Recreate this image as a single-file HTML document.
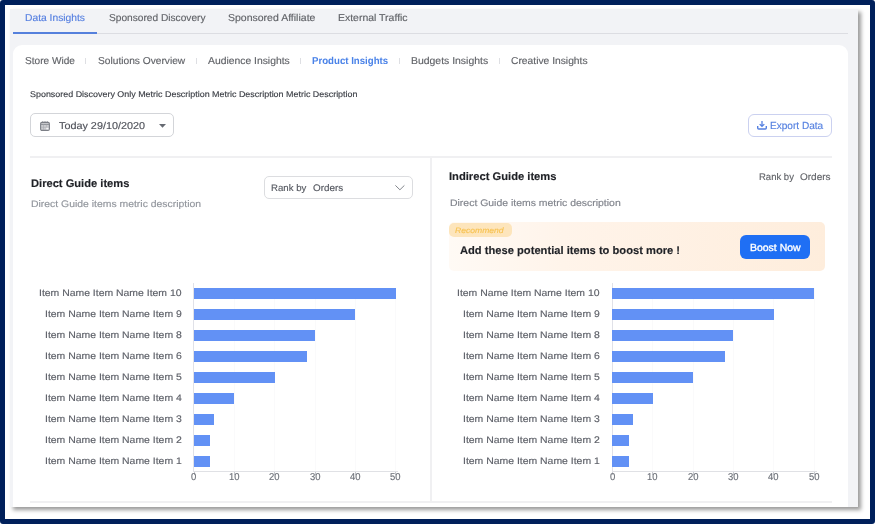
<!DOCTYPE html>
<html><head><meta charset="utf-8"><title>Product Insights</title>
<style>
html,body{margin:0;padding:0}
body{width:875px;height:524px;overflow:hidden;background:#fff;position:relative;font-family:"Liberation Sans", sans-serif}
#frame{position:absolute;left:0;top:0;width:865px;height:514px;border:5px solid #00205b;border-radius:3px;background:#fff}
#shot{position:absolute;left:10px;top:9px;width:848px;height:498px;background:#f2f3f6;box-shadow:3px 3px 4px rgba(0,0,0,.4);overflow:hidden}
#in{position:absolute;left:-10px;top:-9px;width:875px;height:524px;filter:blur(0.45px)}
.t{position:absolute;white-space:pre;text-rendering:geometricPrecision;-webkit-text-stroke:0.15px currentColor;line-height:16px;height:16px;transform-origin:0 50%}
#tabline{position:absolute;left:13px;top:32.6px;width:835px;height:1px;background:#dcdde2}
#tabsel{position:absolute;left:13px;top:31.9px;width:84px;height:2.2px;background:#5580dc}
#card{position:absolute;left:13px;top:45.4px;width:835px;height:470px;background:#fff;border-radius:9px 9px 0 0}
.sep{position:absolute;top:57.8px;width:1px;height:6px;background:#dedfe3}
.box{position:absolute;box-sizing:border-box;border:1px solid #d3d5d9;border-radius:5px;background:#fff}
.hl{position:absolute;height:1.6px;background:#f0f0f2}
.vl{position:absolute;width:1.6px;background:#f0f0f2}
.b{position:absolute;height:11px;background:#6291f5}
.g{position:absolute;top:288px;width:1px;height:183px;background:#fafafb}
.tk{position:absolute;top:471px;width:1px;height:3.5px;background:#c9cbd0}
.ax{position:absolute;top:283px;width:1px;height:189px;background:#e0e1e8}
.bx{position:absolute;top:470.8px;width:205px;height:1px;background:#e0e1e5}
#banner{position:absolute;left:449px;top:222.4px;width:376px;height:48.4px;border-radius:5px;background:linear-gradient(90deg,#fffaf5 0%,#fff4ea 30%,#feeddc 100%)}
#tag{position:absolute;left:449px;top:222.6px;width:63.3px;height:14px;border-radius:5px;background:#fde5bc}
#boost{position:absolute;left:740.3px;top:235.2px;width:69.3px;height:23.7px;border-radius:6px;background:#1f6ff4}
svg{position:absolute;overflow:visible}
</style></head><body>
<div id="frame"></div>
<div id="shot"><div id="in">
<div id="tabline"></div><div id="tabsel"></div>
<div id="card"></div>
<div class="sep" style="left:85.2px"></div><div class="sep" style="left:195.5px"></div><div class="sep" style="left:300px"></div><div class="sep" style="left:398.5px"></div><div class="sep" style="left:498.5px"></div>
<div class="box" style="left:30px;top:113.4px;width:144px;height:23.4px"></div>
<svg style="left:40.2px;top:121.1px" width="10" height="10" viewBox="0 0 10 10"><rect x="0.6" y="1.4" width="8.8" height="8" rx="1.4" fill="#cccdd1" stroke="#7c7f86" stroke-width="1.1"/><path d="M0.6 3.4H9.4" stroke="#8b8e95" stroke-width="1" fill="none"/><path d="M3.5 3.6V9M6.4 3.6V9M1 6.3H9" stroke="#a9abb0" stroke-width="0.6" fill="none"/><path d="M2.6 0.5V1.5M5 0.5V1.5M7.4 0.5V1.5" stroke="#7c7f86" stroke-width="1.3" fill="none"/><path d="M6.2 6.7H8.4V8.4H6.2z" fill="#f6f6f7"/></svg>
<svg style="left:158.7px;top:124px" width="7" height="4" viewBox="0 0 7 4"><path d="M0 0H7L3.5 3.8z" fill="#666a72"/></svg>
<div class="box" style="left:748.2px;top:113.5px;width:84.3px;height:23.2px;border-color:#cbd1f0;border-radius:6px"></div>
<svg style="left:757px;top:121.4px" width="10" height="9" viewBox="0 0 10 9"><path d="M5 0V5.2M2.7 3.1L5 5.4L7.3 3.1" stroke="#5580e0" stroke-width="1.3" fill="none"/><path d="M0.7 5V7Q0.7 8 1.7 8H8.3Q9.3 8 9.3 7V5" stroke="#5580e0" stroke-width="1.4" fill="none"/></svg>
<div class="hl" style="left:30px;top:156px;width:802px"></div>
<div class="hl" style="left:30px;top:501px;width:802px"></div>
<div class="vl" style="left:430px;top:157px;height:345px"></div>
<div class="box" style="left:264.2px;top:175.7px;width:148.4px;height:23.6px;border-color:#dcdde0;border-width:1.2px"></div>
<svg style="left:395.4px;top:185.2px" width="10" height="5.6" viewBox="0 0 10 5.6"><path d="M0.4 0.4L4.9 4.8L9.4 0.4" stroke="#82858c" stroke-width="1" fill="none"/></svg>
<div id="banner"></div><div id="tag"></div><div id="boost"></div>
<div class="g" style="left:234.1px"></div><div class="g" style="left:274.4px"></div><div class="g" style="left:314.7px"></div><div class="g" style="left:355.0px"></div><div class="g" style="left:395.3px"></div><div class="tk" style="left:193.8px"></div><div class="tk" style="left:234.1px"></div><div class="tk" style="left:274.4px"></div><div class="tk" style="left:314.7px"></div><div class="tk" style="left:355.0px"></div><div class="tk" style="left:395.3px"></div><div class="ax" style="left:193.3px"></div><div class="bx" style="left:193.3px"></div><div class="g" style="left:652.3px"></div><div class="g" style="left:692.6px"></div><div class="g" style="left:732.9px"></div><div class="g" style="left:773.2px"></div><div class="g" style="left:813.5px"></div><div class="tk" style="left:612.0px"></div><div class="tk" style="left:652.3px"></div><div class="tk" style="left:692.6px"></div><div class="tk" style="left:732.9px"></div><div class="tk" style="left:773.2px"></div><div class="tk" style="left:813.5px"></div><div class="ax" style="left:611.5px"></div><div class="bx" style="left:611.5px"></div>
<div class="b" style="left:193.8px;top:287.6px;width:202.1px"></div><div class="b" style="left:193.8px;top:308.6px;width:161.6px"></div><div class="b" style="left:193.8px;top:329.7px;width:121.4px"></div><div class="b" style="left:193.8px;top:350.7px;width:113.2px"></div><div class="b" style="left:193.8px;top:371.7px;width:81.2px"></div><div class="b" style="left:193.8px;top:392.8px;width:40.6px"></div><div class="b" style="left:193.8px;top:413.8px;width:20.6px"></div><div class="b" style="left:193.8px;top:434.8px;width:16.6px"></div><div class="b" style="left:193.8px;top:455.8px;width:16.6px"></div><div class="b" style="left:612.0px;top:287.6px;width:202.1px"></div><div class="b" style="left:612.0px;top:308.6px;width:161.6px"></div><div class="b" style="left:612.0px;top:329.7px;width:121.4px"></div><div class="b" style="left:612.0px;top:350.7px;width:113.2px"></div><div class="b" style="left:612.0px;top:371.7px;width:81.2px"></div><div class="b" style="left:612.0px;top:392.8px;width:40.6px"></div><div class="b" style="left:612.0px;top:413.8px;width:20.6px"></div><div class="b" style="left:612.0px;top:434.8px;width:16.6px"></div><div class="b" style="left:612.0px;top:455.8px;width:16.6px"></div>
<span class="t" style="left:25.0px;top:11px;font-size:10px;color:#557fe0;transform:scaleX(1.0278)">Data Insights</span><span class="t" style="left:108.8px;top:11px;font-size:10px;color:#616368;transform:scaleX(1.0153)">Sponsored Discovery</span><span class="t" style="left:227.6px;top:11px;font-size:10px;color:#616368;transform:scaleX(1.0502)">Sponsored Affiliate</span><span class="t" style="left:337.7px;top:11px;font-size:10px;color:#616368;transform:scaleX(1.0464)">External Traffic</span><span class="t" style="left:25.0px;top:54px;font-size:10px;color:#616368;transform:scaleX(1.0087)">Store Wide</span><span class="t" style="left:97.5px;top:54px;font-size:10px;color:#616368;transform:scaleX(1.0188)">Solutions Overview</span><span class="t" style="left:208.0px;top:54px;font-size:10px;color:#616368;transform:scaleX(1.0348)">Audience Insights</span><span class="t" style="left:312.3px;top:54px;font-size:10px;color:#4a82e8;transform:scaleX(0.9657);font-weight:700;-webkit-text-stroke-width:0.01px">Product Insights</span><span class="t" style="left:410.9px;top:54px;font-size:10px;color:#616368;transform:scaleX(1.0428)">Budgets Insights</span><span class="t" style="left:510.6px;top:54px;font-size:10px;color:#616368;transform:scaleX(1.0284)">Creative Insights</span><span class="t" style="left:30.0px;top:86px;font-size:8.4px;color:#3a3d44;transform:scaleX(1.0661)">Sponsored Discovery Only Metric Description Metric Description Metric Description</span><span class="t" style="left:59.0px;top:119px;font-size:10px;color:#50535b;transform:scaleX(1.0815)">Today 29/10/2020</span><span class="t" style="left:769.7px;top:119px;font-size:10.3px;color:#5580e0;transform:scaleX(0.9784)">Export Data</span><span class="t" style="left:30.9px;top:176px;font-size:11px;color:#1f2126;transform:scaleX(1.0123);font-weight:700">Direct Guide items</span><span class="t" style="left:31.3px;top:197px;font-size:9.5px;color:#92969d;transform:scaleX(1.0959)">Direct Guide items metric description</span><span class="t" style="left:271.3px;top:181px;font-size:9.5px;color:#555860;transform:scaleX(1.0126)">Rank by</span><span class="t" style="left:313.0px;top:181px;font-size:9.5px;color:#555860;transform:scaleX(1.0397)">Orders</span><span class="t" style="left:449.3px;top:169px;font-size:11px;color:#1f2126;transform:scaleX(1.0165);font-weight:700">Indirect Guide items</span><span class="t" style="left:449.5px;top:196px;font-size:9.5px;color:#80848c;transform:scaleX(1.0997)">Direct Guide items metric description</span><span class="t" style="left:758.9px;top:170px;font-size:9.6px;color:#616368;transform:scaleX(0.9914)">Rank by</span><span class="t" style="left:800.0px;top:170px;font-size:9.6px;color:#616368;transform:scaleX(1.0400)">Orders</span><span class="t" style="left:455.0px;top:223px;font-size:7.8px;color:#f7c252;transform:scaleX(1.0995);font-style:italic">Recommend</span><span class="t" style="left:460.1px;top:243px;font-size:11px;color:#1f2126;transform:scaleX(1.0144);font-weight:700">Add these potential items to boost more !</span><span class="t" style="left:749.9px;top:241px;font-size:10.3px;color:#ffffff;transform:scaleX(1.0161);-webkit-text-stroke-width:0.35px">Boost Now</span><span class="t" style="left:39.1px;top:286px;font-size:9.5px;color:#5c5f67;transform:scaleX(1.0972)">Item Name Item Name Item 10</span><span class="t" style="left:44.8px;top:307px;font-size:9.5px;color:#5c5f67;transform:scaleX(1.0980)">Item Name Item Name Item 9</span><span class="t" style="left:44.8px;top:328px;font-size:9.5px;color:#5c5f67;transform:scaleX(1.0980)">Item Name Item Name Item 8</span><span class="t" style="left:44.8px;top:349px;font-size:9.5px;color:#5c5f67;transform:scaleX(1.0980)">Item Name Item Name Item 6</span><span class="t" style="left:44.8px;top:370px;font-size:9.5px;color:#5c5f67;transform:scaleX(1.0980)">Item Name Item Name Item 5</span><span class="t" style="left:44.8px;top:391px;font-size:9.5px;color:#5c5f67;transform:scaleX(1.0980)">Item Name Item Name Item 4</span><span class="t" style="left:44.8px;top:412px;font-size:9.5px;color:#5c5f67;transform:scaleX(1.0980)">Item Name Item Name Item 3</span><span class="t" style="left:44.8px;top:433px;font-size:9.5px;color:#5c5f67;transform:scaleX(1.0980)">Item Name Item Name Item 2</span><span class="t" style="left:44.8px;top:454px;font-size:9.5px;color:#5c5f67;transform:scaleX(1.0980)">Item Name Item Name Item 1</span><span class="t" style="left:191.3px;top:470px;font-size:10px;color:#6c7078;transform:scaleX(0.9528)">0</span><span class="t" style="left:229.1px;top:470px;font-size:10px;color:#6c7078;transform:scaleX(0.9438)">10</span><span class="t" style="left:269.4px;top:470px;font-size:10px;color:#6c7078;transform:scaleX(0.9438)">20</span><span class="t" style="left:309.6px;top:470px;font-size:10px;color:#6c7078;transform:scaleX(0.9438)">30</span><span class="t" style="left:349.9px;top:470px;font-size:10px;color:#6c7078;transform:scaleX(0.9438)">40</span><span class="t" style="left:390.2px;top:470px;font-size:10px;color:#6c7078;transform:scaleX(0.9438)">50</span><span class="t" style="left:457.3px;top:286px;font-size:9.5px;color:#5c5f67;transform:scaleX(1.0972)">Item Name Item Name Item 10</span><span class="t" style="left:463.0px;top:307px;font-size:9.5px;color:#5c5f67;transform:scaleX(1.0980)">Item Name Item Name Item 9</span><span class="t" style="left:463.0px;top:328px;font-size:9.5px;color:#5c5f67;transform:scaleX(1.0980)">Item Name Item Name Item 8</span><span class="t" style="left:463.0px;top:349px;font-size:9.5px;color:#5c5f67;transform:scaleX(1.0980)">Item Name Item Name Item 6</span><span class="t" style="left:463.0px;top:370px;font-size:9.5px;color:#5c5f67;transform:scaleX(1.0980)">Item Name Item Name Item 5</span><span class="t" style="left:463.0px;top:391px;font-size:9.5px;color:#5c5f67;transform:scaleX(1.0980)">Item Name Item Name Item 4</span><span class="t" style="left:463.0px;top:412px;font-size:9.5px;color:#5c5f67;transform:scaleX(1.0980)">Item Name Item Name Item 3</span><span class="t" style="left:463.0px;top:433px;font-size:9.5px;color:#5c5f67;transform:scaleX(1.0980)">Item Name Item Name Item 2</span><span class="t" style="left:463.0px;top:454px;font-size:9.5px;color:#5c5f67;transform:scaleX(1.0980)">Item Name Item Name Item 1</span><span class="t" style="left:609.6px;top:470px;font-size:10px;color:#6c7078;transform:scaleX(0.9528)">0</span><span class="t" style="left:647.2px;top:470px;font-size:10px;color:#6c7078;transform:scaleX(0.9438)">10</span><span class="t" style="left:687.6px;top:470px;font-size:10px;color:#6c7078;transform:scaleX(0.9438)">20</span><span class="t" style="left:727.9px;top:470px;font-size:10px;color:#6c7078;transform:scaleX(0.9438)">30</span><span class="t" style="left:768.2px;top:470px;font-size:10px;color:#6c7078;transform:scaleX(0.9438)">40</span><span class="t" style="left:808.5px;top:470px;font-size:10px;color:#6c7078;transform:scaleX(0.9438)">50</span>
</div></div>
</body></html>
